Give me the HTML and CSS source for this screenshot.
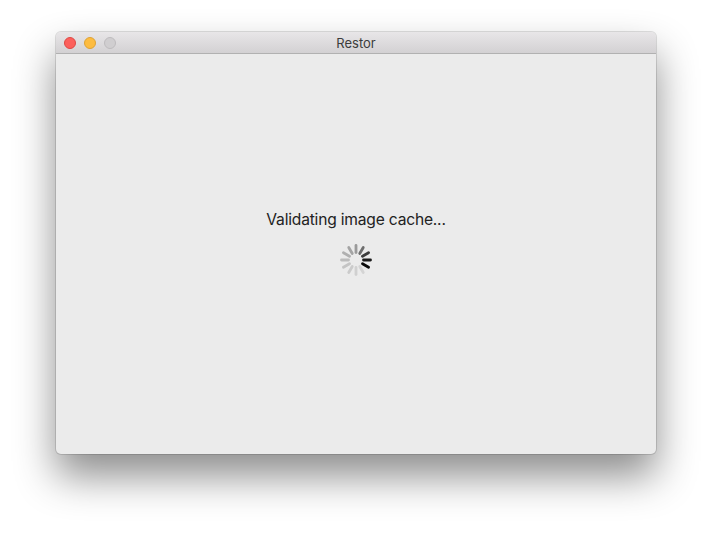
FILE: index.html
```html
<!DOCTYPE html>
<html>
<head>
<meta charset="utf-8">
<link rel="stylesheet" href="styles.css">
</head>
<body>
<div class="window">
  <div class="titlebar">
    <div class="lights">
      <span class="light close"></span>
      <span class="light min"></span>
      <span class="light max"></span>
    </div>
    <div class="title">Restor</div>
  </div>
  <div class="content">
    <div class="message">Validating image cache...</div>
    <svg class="spinner" width="34" height="34" viewBox="-17 -17 34 34">
      <g stroke-linecap="round" stroke-width="2.8">
        <line x1="0" y1="-7.5" x2="0" y2="-14.5" stroke="#9a9a9a" transform="rotate(0)"/>
        <line x1="0" y1="-7.5" x2="0" y2="-14.5" stroke="#6e6e6e" transform="rotate(30)"/>
        <line x1="0" y1="-7.5" x2="0" y2="-14.5" stroke="#3c3c3c" transform="rotate(60)"/>
        <line x1="0" y1="-7.5" x2="0" y2="-14.5" stroke="#1a1a1a" transform="rotate(90)"/>
        <line x1="0" y1="-7.5" x2="0" y2="-14.5" stroke="#0a0a0a" transform="rotate(120)"/>
        <line x1="0" y1="-7.5" x2="0" y2="-14.5" stroke="#d4d4d4" transform="rotate(150)"/>
        <line x1="0" y1="-7.5" x2="0" y2="-14.5" stroke="#d0d0d0" transform="rotate(180)"/>
        <line x1="0" y1="-7.5" x2="0" y2="-14.5" stroke="#cbcbcb" transform="rotate(210)"/>
        <line x1="0" y1="-7.5" x2="0" y2="-14.5" stroke="#c4c4c4" transform="rotate(240)"/>
        <line x1="0" y1="-7.5" x2="0" y2="-14.5" stroke="#bcbcbc" transform="rotate(270)"/>
        <line x1="0" y1="-7.5" x2="0" y2="-14.5" stroke="#b0b0b0" transform="rotate(300)"/>
        <line x1="0" y1="-7.5" x2="0" y2="-14.5" stroke="#a4a4a4" transform="rotate(330)"/>
      </g>
    </svg>
  </div>
</div>
</body>
</html>
```

FILE: styles.css
```css
html, body {
  margin: 0;
  padding: 0;
  background: #ffffff;
}
body {
  width: 712px;
  height: 534px;
  overflow: hidden;
  font-family: "Inter", "Liberation Sans", sans-serif;
}
.window {
  margin: 32px 0 0 56px;
  width: 600px;
  height: 422px;
  border-radius: 5px;
  background: #ebebeb;
  overflow: hidden;
  box-shadow: 0 0 0 1px rgba(0,0,0,0.12), 0 22px 40px rgba(0,0,0,0.45);
  display: flex;
  flex-direction: column;
}
.titlebar {
  height: 21px;
  flex: 0 0 21px;
  background: linear-gradient(#e8e6e8, #d3d1d3);
  border-bottom: 1px solid #b1b1b1;
  display: flex;
  align-items: center;
  position: relative;
}
.lights {
  display: flex;
  gap: 8px;
  padding-left: 8px;
}
.light {
  width: 12px;
  height: 12px;
  border-radius: 50%;
  box-sizing: border-box;
}
.close { background: #fc605c; border: 0.5px solid #de4844; }
.min { background: #fdbc40; border: 0.5px solid #dea234; }
.max { background: #d0ced0; border: 0.5px solid #bdbbbd; }
.title {
  position: absolute;
  left: 0;
  right: 0;
  text-align: center;
  font-size: 13px;
  color: #3c3c3c;
  line-height: 22px;
}
.content {
  flex: 1;
  display: flex;
  flex-direction: column;
  align-items: center;
  padding-top: 156px;
}
.message {
  font-size: 15.6px;
  color: #222222;
  letter-spacing: -0.2px;
}
.spinner {
  margin-top: 14px;
  display: block;
}
```
